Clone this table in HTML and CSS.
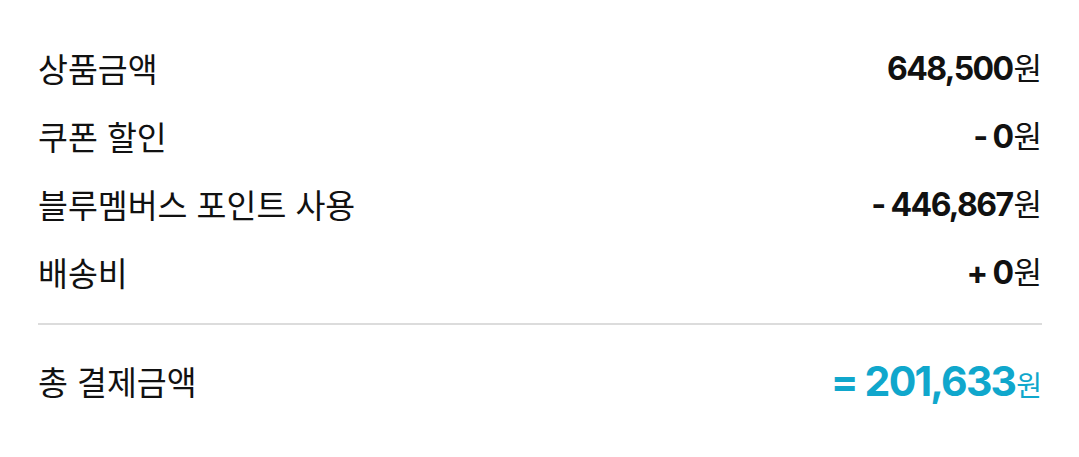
FILE: index.html
```html
<!DOCTYPE html>
<html lang="ko">
<head>
    <meta charset="UTF-8">
    <title>결제 요약</title>
    <link rel="stylesheet" href="styles.css">
</head>
<body>
    <!-- 결제 금액 요약 -->
    <div class="summary">
        <div class="row">
            <span class="label">상품금액</span>
            <span class="price"><b>648,500</b>원</span>
        </div>
        <div class="row">
            <span class="label">쿠폰 할인</span>
            <span class="price"><b>- 0</b>원</span>
        </div>
        <div class="row">
            <span class="label">블루멤버스 포인트 사용</span>
            <span class="price"><b>- 446,867</b>원</span>
        </div>
        <div class="row">
            <span class="label">배송비</span>
            <span class="price"><b>+ 0</b>원</span>
        </div>

        <div class="divider"></div>

        <div class="row total">
            <span class="label">총 결제금액</span>
            <span class="price"><b>= 201,633</b>원</span>
        </div>
    </div>
</body>
</html>
```

FILE: styles.css
```css
/* Général */
body {
    margin: 0;
    padding: 0;
    background-color: #fff;
    font-family: "Noto Sans CJK KR", "Noto Sans", sans-serif;
    color: #111;
}

/* Résumé */
.summary {
    padding: 34px 37px 0 38px;
}

.row {
    display: flex;
    justify-content: space-between;
    align-items: center;
    height: 68px;
}

.label {
    font-size: 32.5px;
    line-height: 1;
}

.price {
    font-size: 31px;
    line-height: 1;
    white-space: pre;
}
.price b {
    font-family: Inter, "Noto Sans CJK KR", sans-serif;
    font-size: 32px;
    font-weight: 700;
    letter-spacing: -1.6px;
    margin-right: 1px;
}

.divider {
    height: 2px;
    background-color: #dcdcdc;
    margin-top: 17px;
    margin-bottom: 22px;
}

/* Total */
.total .price {
    color: #10a7cc;
    font-size: 28px;
}
.total .price b {
    font-size: 41px;
    letter-spacing: -1.8px;
}
```
